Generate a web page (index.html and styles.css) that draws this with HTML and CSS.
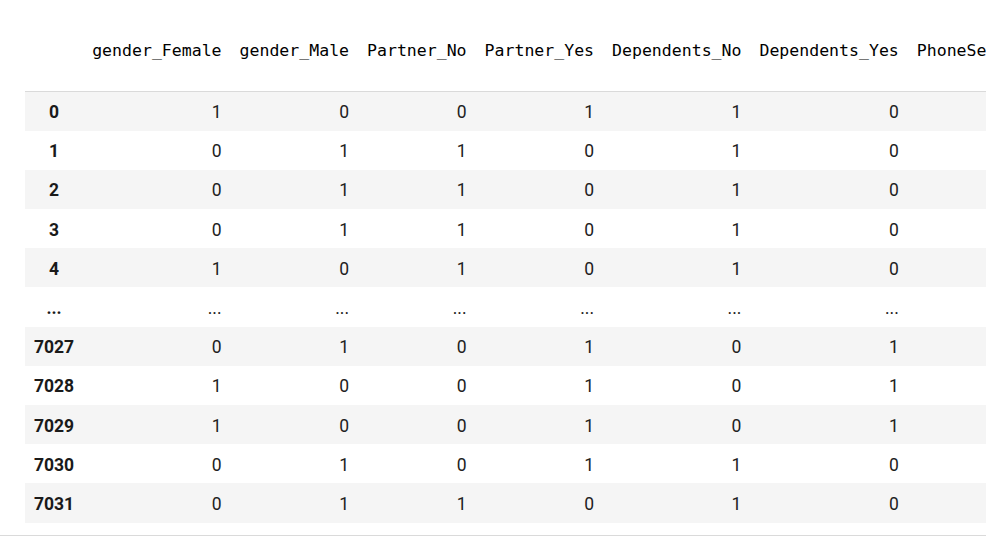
FILE: index.html
```html
<!DOCTYPE html>
<html>
<head>
<meta charset="utf-8">
<link rel="stylesheet" href="styles.css">
</head>
<body>
<div class="output">
  <div class="scroller">
    <table class="df">
      <thead>
        <tr>
          <th class="idx"></th>
          <th>gender_Female</th>
          <th>gender_Male</th>
          <th>Partner_No</th>
          <th>Partner_Yes</th>
          <th>Dependents_No</th>
          <th>Dependents_Yes</th>
          <th>PhoneService_No</th>
          <th>PhoneService_Yes</th>
        </tr>
      </thead>
      <tbody>
        <tr><th class="idx">0</th><td>1</td><td>0</td><td>0</td><td>1</td><td>1</td><td>0</td><td>1</td><td>0</td></tr>
        <tr><th class="idx">1</th><td>0</td><td>1</td><td>1</td><td>0</td><td>1</td><td>0</td><td>0</td><td>1</td></tr>
        <tr><th class="idx">2</th><td>0</td><td>1</td><td>1</td><td>0</td><td>1</td><td>0</td><td>0</td><td>1</td></tr>
        <tr><th class="idx">3</th><td>0</td><td>1</td><td>1</td><td>0</td><td>1</td><td>0</td><td>1</td><td>0</td></tr>
        <tr><th class="idx">4</th><td>1</td><td>0</td><td>1</td><td>0</td><td>1</td><td>0</td><td>0</td><td>1</td></tr>
        <tr><th class="idx">...</th><td>...</td><td>...</td><td>...</td><td>...</td><td>...</td><td>...</td><td>...</td><td>...</td></tr>
        <tr><th class="idx">7027</th><td>0</td><td>1</td><td>0</td><td>1</td><td>0</td><td>1</td><td>0</td><td>1</td></tr>
        <tr><th class="idx">7028</th><td>1</td><td>0</td><td>0</td><td>1</td><td>0</td><td>1</td><td>0</td><td>1</td></tr>
        <tr><th class="idx">7029</th><td>1</td><td>0</td><td>0</td><td>1</td><td>0</td><td>1</td><td>1</td><td>0</td></tr>
        <tr><th class="idx">7030</th><td>0</td><td>1</td><td>0</td><td>1</td><td>1</td><td>0</td><td>0</td><td>1</td></tr>
        <tr><th class="idx">7031</th><td>0</td><td>1</td><td>1</td><td>0</td><td>1</td><td>0</td><td>0</td><td>1</td></tr>
      </tbody>
    </table>
  </div>
  <div class="divider"></div>
</div>
</body>
</html>
```
FILE: styles.css
```css
html, body {
  margin: 0;
  padding: 0;
  background: #ffffff;
}

.output {
  width: 986px;
  overflow: hidden;
}

.scroller {
  padding-left: 25px;
  overflow: hidden;
}

.df {
  border-collapse: collapse;
  border-spacing: 0;
  white-space: nowrap;
  font-family: Roboto, "Liberation Sans", sans-serif;
  font-size: 17.5px;
  color: #212121;
}

.df thead th {
  font-family: "DejaVu Sans Mono", "Liberation Mono", monospace;
  font-size: 16.55px;
  font-weight: normal;
  color: #000000;
  line-height: 20px;
  padding: 41px 9px 30px 9px;
  text-align: right;
  border-bottom: 1px solid #dadada;
}

.df tbody tr {
  height: 39.2px;
}

.df tbody tr:nth-child(odd) {
  background: #f5f5f5;
}

.df td {
  padding: 2px 9px 0 9px;
  text-align: right;
  vertical-align: middle;
  line-height: 20px;
}

.df th.idx {
  width: 40px;
  padding-left: 9px;
  padding-right: 9px;
  text-align: center;
}

.df tbody th.idx {
  font-weight: bold;
  color: #1a1a1a;
  vertical-align: middle;
  line-height: 20px;
  padding-top: 2px;
  padding-bottom: 0;
}

.divider {
  margin-top: 12px;
  height: 1px;
  background: #dadada;
}
```
